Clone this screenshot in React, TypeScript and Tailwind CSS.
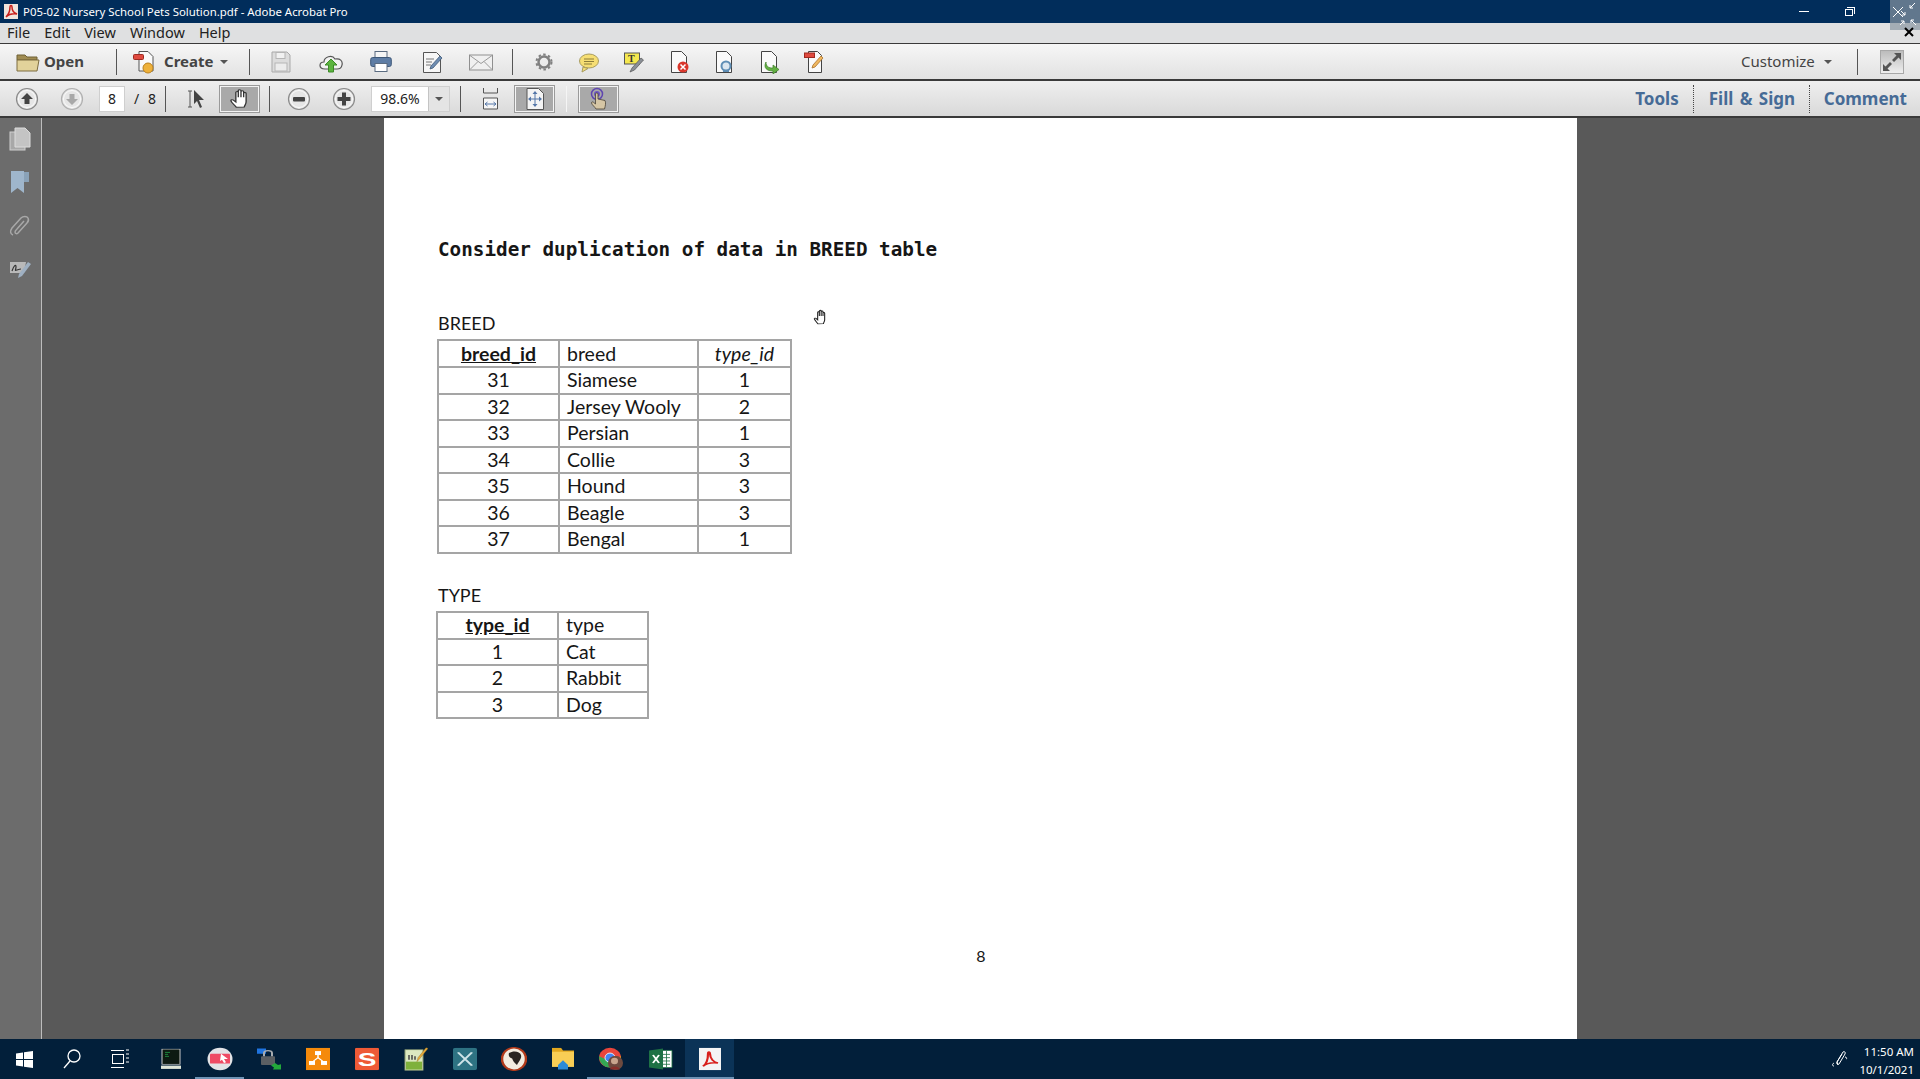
import { ReactNode } from "react";

const breeds = [
  ["31", "Siamese", "1"],
  ["32", "Jersey Wooly", "2"],
  ["33", "Persian", "1"],
  ["34", "Collie", "3"],
  ["35", "Hound", "3"],
  ["36", "Beagle", "3"],
  ["37", "Bengal", "1"],
];

const types = [
  ["1", "Cat"],
  ["2", "Rabbit"],
  ["3", "Dog"],
];

const cell = "border-2 border-[#a5a5a5] pl-[7px] pr-[5px] py-0 font-normal leading-[20px]";
const centerCell = "border-2 border-[#a5a5a5] px-[6px] py-0 font-normal leading-[20px] text-center";

const Sep = ({ className }: { className: string }) => (
  <div className={`h-[26px] w-px shrink-0 bg-[#555] ${className}`} />
);

const Caret = ({ className, color = "#555" }: { className: string; color?: string }) => (
  <svg width="8" height="4" viewBox="0 0 8 4" className={`shrink-0 ${className}`}>
    <path d="M0 0h8L4 4z" fill={color} />
  </svg>
);

const Icon = ({ w, h = 24, className, children }: { w: number; h?: number; className: string; children: ReactNode }) => (
  <svg width={w} height={h} viewBox={`0 0 ${w} ${h}`} className={`shrink-0 ${className}`}>
    {children}
  </svg>
);

const DocShape = () => (
  <path d="M1.500 1.500h10l5 5v16h-15z" fill="#fafafa" stroke="#444" strokeWidth="1" />
);

const RoundBtn = ({ className, active, children }: { className: string; active?: boolean; children: ReactNode }) => (
  <svg width="24" height="24" viewBox="0 0 24 24" className={`shrink-0 ${className}`}>
    <circle cx="12" cy="12" r="10.500" fill="#e6e6e6" stroke={active ? "#8a8a8a" : "#b0b0b0"} strokeWidth="1.200" />
    <circle cx="12" cy="12" r="8.500" fill="none" stroke="#fafafa" />
    <g fill={active ? "#444" : "#a8a8a8"}>{children}</g>
  </svg>
);

const PressedBtn = ({ className, children }: { className: string; children: ReactNode }) => (
  <div className={`flex h-[26px] w-[39px] shrink-0 items-center justify-center border border-[#f4f4f4] bg-[#a9a9a9] outline outline-1 outline-[#9a9a9a] ${className}`}>
    {children}
  </div>
);

// open hand with four fingers, same shape for the tool button and the page cursor
const HandPath = "M6 21c-1-2-4-5-4.400-7-.2-1.200 1.200-1.500 2-.7l2 2V5c0-1.500 2-1.500 2 0v5-7c0-1.500 2.200-1.500 2.200 0v7-6c0-1.500 2.200-1.500 2.200 0v6-4c0-1.400 2-1.400 2 0v9c0 2.500-1 3.500-1.500 5.700z";

const Toolbar1 = () => (
  <div className="flex h-[37px] items-center border-b-2 border-[#3a3a3a] bg-gradient-to-b from-[#f6f6f6] to-[#e2e2e2]">
    <Icon w={24} className="ml-[16px]">
      <path d="M1 5h8l2 2h10v3H1z" fill="#a08c52" stroke="#6f6035" />
      <path d="M1 21V10h22l-2 11z" fill="#e2d29a" stroke="#7c6c40" />
    </Icon>
    <span className="ml-[4px] w-[41px] whitespace-nowrap text-[15px] font-bold text-[#444]">Open</span>
    <Sep className="ml-[31px]" />
    <Icon w={22} className="ml-[16px]">
      <path d="M6 1.500h9l5 5V21H6z" fill="#fafafa" stroke="#555" />
      <rect x="0.500" y="4.500" width="10" height="5" rx="1" fill="#e04a3f" stroke="#9c2a22" />
      <circle cx="15" cy="18" r="5" fill="#eeb13a" stroke="#b9801e" />
    </Icon>
    <span className="ml-[9px] w-[49px] whitespace-nowrap text-[15px] font-bold text-[#444]">Create</span>
    <Caret className="ml-[7px]" />
    <Sep className="ml-[21px]" />
    <Icon w={20} className="ml-[21px]">
      <path d="M1 2h15l3 3v17H1z" fill="#dcdcdc" stroke="#a9a9a9" />
      <rect x="5" y="2.500" width="9" height="6" fill="#f1f1f1" stroke="#b5b5b5" />
      <rect x="4" y="13" width="12" height="8" fill="#ececec" stroke="#b5b5b5" />
    </Icon>
    <Icon w={24} className="ml-[28px]">
      <path d="M6 19c-7 0-6-7-1-7 0-5 8-8 11-3 5-1 8 2 7 6-.5 3-3 4-5 4z" fill="#f2f2f2" stroke="#555" strokeWidth="1.200" />
      <path d="M12 9l-6 6h3.500v7h5v-7H18z" fill="#5cb43f" stroke="#3d8a28" />
    </Icon>
    <Icon w={22} className="ml-[27px]">
      <rect x="5" y="1.500" width="12" height="7" fill="#f5f5f5" stroke="#5a6b80" />
      <rect x="0.700" y="7.500" width="20.600" height="9" rx="2" fill="#5e7da5" stroke="#3e5878" />
      <rect x="5" y="13.500" width="12" height="8" fill="#fff" stroke="#5a6b80" />
    </Icon>
    <Icon w={21} className="ml-[30px]">
      <path d="M1.500 2.500h13l4 4v16h-17z" fill="#f6f6f6" stroke="#555" />
      <path d="M4 9h8M4 12h6M4 15h5" stroke="#777" />
      <path d="M8 19l1-3 9-10 2 2-9 10z" fill="#6e8db2" stroke="#3e5878" strokeWidth="0.800" />
    </Icon>
    <Icon w={24} className="ml-[26px]">
      <rect x="0.500" y="5" width="23" height="15" fill="#f0f0f0" stroke="#8f8f8f" />
      <path d="M1 5.500l11 8 11-8M1 19.500l8-8M23 19.500l-8-8" fill="none" stroke="#9a9a9a" />
    </Icon>
    <Sep className="ml-[19px]" />
    <Icon w={18} className="ml-[22px]">
      <circle cx="9" cy="12" r="5.500" fill="none" stroke="#808080" strokeWidth="2.500" />
      <circle cx="9" cy="12" r="7.500" fill="none" stroke="#808080" strokeWidth="2" strokeDasharray="2.500 2.400" />
    </Icon>
    <Icon w={20} className="ml-[26px]">
      <ellipse cx="10" cy="11" rx="9.500" ry="7" fill="#f6de73" stroke="#a89c5f" />
      <path d="M4 17l-1 5 6-3.500z" fill="#f6de73" stroke="#a89c5f" />
      <path d="M5 9h10M5 11.500h10M5 14h8" stroke="#8c7d3a" />
    </Icon>
    <Icon w={20} className="ml-[25px]">
      <rect x="0.500" y="3" width="15" height="11" fill="#f5e84f" stroke="#555" />
      <text x="4" y="12" fontSize="10" fontWeight="700" fontFamily="Liberation Serif, serif" fill="#333">T</text>
      <path d="M6 22l2-4 9-10 2.500 2-9 10z" fill="#8a8f96" stroke="#555" strokeWidth="0.700" />
    </Icon>
    <Icon w={19} className="ml-[26px]">
      <DocShape />
      <circle cx="13" cy="17" r="5.500" fill="#d9362b" />
      <path d="M10.500 14.500l5 5m0-5l-5 5" stroke="#fff" strokeWidth="1.500" />
    </Icon>
    <Icon w={18} className="ml-[26px]">
      <DocShape />
      <circle cx="11" cy="16" r="4.500" fill="#dbe6ef" stroke="#5f8eb5" strokeWidth="2" />
      <path d="M8 21h6" stroke="#5f8eb5" strokeWidth="2" />
    </Icon>
    <Icon w={19} className="ml-[27px]">
      <DocShape />
      <path d="M6 12c0 5 3 6 7 6v-3l6 4.500-6 4.500v-3c-6 0-10-3-7-9z" fill="#63b043" stroke="#3d7f26" strokeWidth="0.700" />
    </Icon>
    <Icon w={21} className="ml-[25px]">
      <path d="M4.500 1.500h9l4 4v17h-13z" fill="#fafafa" stroke="#444" />
      <rect x="0.500" y="3" width="10" height="4.500" fill="#e04a3f" stroke="#a0291f" />
      <path d="M8 18l1-3 8-9 2 2-8 9z" fill="#f0b860" stroke="#a9702a" strokeWidth="0.800" />
    </Icon>
    <div className="ml-auto flex items-center pr-[16px]">
      <span className="w-[72px] whitespace-nowrap text-[15px] text-[#444]">Customize</span>
      <Caret className="ml-[11px]" />
      <Sep className="ml-[25px]" />
      <div className="ml-[22px] flex h-[24px] w-[24px] items-center justify-center border border-[#a8a8a8] bg-gradient-to-b from-[#bcbcbc] to-[#efefef]">
        <svg width="20" height="20" viewBox="0 0 20 20">
          <path d="M12 1h7v7l-2.500-2.500L12 10 10 8l4.500-4.500z" fill="#555" />
          <path d="M8 19H1v-7l2.500 2.500L8 10l2 2-4.500 4.500z" fill="#555" />
        </svg>
      </div>
    </div>
  </div>
);

const Toolbar2 = () => (
  <div className="flex h-[37px] items-center border-b-2 border-[#3a3a3a] bg-gradient-to-b from-[#efefef] to-[#d9d9d9]">
    <RoundBtn className="ml-[15px]" active>
      <path d="M12 6l6 6h-3.500v5h-5v-5H6z" />
    </RoundBtn>
    <RoundBtn className="ml-[21px]">
      <path d="M12 18l6-6h-3.500V7h-5v5H6z" />
    </RoundBtn>
    <div className="ml-[15px] flex h-[26px] w-[26px] items-center justify-center border border-[#cfcfcf] bg-white text-[14px] text-[#222]">8</div>
    <span className="ml-[9px] flex w-[22px] justify-between text-[14px] text-[#222]">
      <span>/</span>
      <span>8</span>
    </span>
    <Sep className="ml-[9px]" />
    <Icon w={18} className="ml-[21px]">
      <path d="M1 4h4M1 20h4M3 4v16" stroke="#555" fill="none" />
      <path d="M7 3l10 10h-5l3 7-2 1-3-7-3 3z" fill="#444" />
    </Icon>
    <PressedBtn className="ml-[15px]">
      <svg width="22" height="22" viewBox="0 0 18 24" preserveAspectRatio="none">
        <path d={HandPath} fill="#fff" stroke="#333" strokeWidth="1.100" />
      </svg>
    </PressedBtn>
    <Sep className="ml-[10px]" />
    <RoundBtn className="ml-[17px]" active>
      <rect x="6" y="10" width="12" height="4.500" rx="1" />
    </RoundBtn>
    <RoundBtn className="ml-[21px]" active>
      <path d="M10 5.500h4V10h4.500v4H14v4.500h-4V14H5.500v-4H10z" />
    </RoundBtn>
    <div className="ml-[15px] flex h-[26px] w-[79px] items-stretch border border-[#cfcfcf] bg-white">
      <span className="flex w-[56px] items-center justify-center text-[14px] text-[#222]">98.6%</span>
      <span className="flex flex-1 items-center justify-center border-l border-[#c4c4c4] bg-[#e4e4e4]">
        <Caret className="" />
      </span>
    </div>
    <Sep className="ml-[10px]" />
    <Icon w={17} className="ml-[21px]">
      <path d="M1.500 1v5h14V1" fill="none" stroke="#555" />
      <path d="M1.500 22v-11h14v11z" fill="#f6f6f6" stroke="#555" />
      <path d="M3 17h11M3 17l2.500-2M3 17l2.500 2M14 17l-2.500-2M14 17l-2.500 2" stroke="#5577a8" fill="none" />
    </Icon>
    <PressedBtn className="ml-[16px]">
      <svg width="18" height="22" viewBox="0 0 18 22">
        <path d="M1 .5h11.500l5 5V21.500H1z" fill="#f4f4f4" stroke="#555" />
        <path d="M9 4v14M3 11h12" stroke="#5577a8" />
        <path d="M9 3l2.500 3h-5zM9 19l2.500-3h-5zM2 11l3-2.500v5zM16 11l-3-2.500v5z" fill="#5577a8" />
      </svg>
    </PressedBtn>
    <Sep className="ml-[12px] !bg-[#f5f5f5]" />
    <PressedBtn className="ml-[12px]">
      <svg width="20" height="24" viewBox="0 0 20 24">
        <circle cx="8" cy="7" r="5.500" fill="none" stroke="#5f46b0" strokeWidth="1.500" />
        <circle cx="8" cy="7" r="3" fill="#6d55c2" />
        <path d="M6.500 7c0-1.500 2.500-1.500 2.500 0v5l7 1.500c1 2 .5 5-.5 8.500H7c-1-2-4-4-4.500-6-.2-1 1-1.500 2-.7l2 1.700z" fill="#d6c6a5" stroke="#4a4236" strokeWidth="0.800" />
      </svg>
    </PressedBtn>
    <div className="ml-auto flex items-center text-[17px] font-bold text-[#466b96]">
      <span className="whitespace-nowrap">Tools</span>
      <div className="ml-[14px] h-[28px] border-l border-dotted border-[#444]" />
      <span className="ml-[15px] w-[85px] whitespace-nowrap [word-spacing:2px]">Fill &amp; Sign</span>
      <div className="ml-[15px] h-[28px] border-l border-dotted border-[#444]" />
      <span className="ml-[14px] mr-[13px] whitespace-nowrap">Comment</span>
    </div>
  </div>
);

const SideRail = () => (
  <div className="flex w-[42px] shrink-0 flex-col items-center border-r border-[#bdbdbd] bg-[#6c6c6c] pr-[2px] pt-[9px]">
    <svg width="22" height="24" viewBox="0 0 22 24">
      <rect x="1" y="5" width="15" height="18" fill="#a8a8a8" stroke="#cfcfcf" />
      <path d="M6 1h10l5 5v14H6z" fill="#c4c4c4" stroke="#dcdcdc" />
    </svg>
    <svg width="20" height="24" viewBox="0 0 20 24" className="mt-[19px]">
      <path d="M1 1h13v22l-6.500-5L1 23z" fill="#9fb6cc" />
      <path d="M14 2h5v10h-5z" fill="#8aa2b8" />
    </svg>
    <svg width="22" height="24" viewBox="0 0 22 24" className="mt-[20px]">
      <path d="M4 21c-3-1-3-4-1-7l9-10c2-2 6-2 7 0s0 4-1 5l-9 10c-1 1-3 1-3-1 0-1 1-2 2-3l7-8" fill="none" stroke="#a8a8a8" strokeWidth="1.500" />
    </svg>
    <svg width="22" height="20" viewBox="0 0 22 20" className="mt-[21px]">
      <path d="M1 3h16l-2 11H1z" fill="#b9b9b9" />
      <path d="M3 12c2-6 4-7 4-4s-2 4 1 3 3-1 4-1" fill="none" stroke="#333" strokeWidth="1.200" />
      <path d="M9 19l1-4 9-12 3 2-9 12z" fill="#9fb0c2" />
    </svg>
  </div>
);

const Page = () => (
  <div className="relative h-full w-[1193px] bg-white pl-[53px] pt-[120px] text-[19.500px] leading-[26px] text-[#161616] [font-family:Lato,sans-serif]">
    <h1 className="ml-[1px] whitespace-nowrap text-[19.300px] font-bold leading-[24px] [font-family:'DejaVu_Sans_Mono',monospace]">
      Consider duplication of data in BREED table
    </h1>
    <p className="ml-[1px] mt-[48px] h-[26px] text-[18px]">BREED</p>
    <table className="mt-[3px] table-fixed border-collapse">
      <thead>
        <tr className="h-[27px]">
          <th className={`${centerCell} w-[121px] !font-bold underline`}>breed_id</th>
          <th className={`${cell} w-[139px] text-left`}>breed</th>
          <th className={`${centerCell} w-[93px] italic`}>type_id</th>
        </tr>
      </thead>
      <tbody>
        {breeds.map(([id, name, typeId]) => (
          <tr key={id} className="h-[26.500px]">
            <td className={centerCell}>{id}</td>
            <td className={cell}>{name}</td>
            <td className={centerCell}>{typeId}</td>
          </tr>
        ))}
      </tbody>
    </table>
    <p className="ml-[1px] mt-[28px] h-[26px] text-[18px]">TYPE</p>
    <table className="mt-[3px] -ml-[1px] table-fixed border-collapse">
      <thead>
        <tr className="h-[27px]">
          <th className={`${centerCell} w-[121px] !font-bold underline`}>type_id</th>
          <th className={`${cell} w-[90px] text-left`}>type</th>
        </tr>
      </thead>
      <tbody>
        {types.map(([id, name]) => (
          <tr key={id} className="h-[26.500px]">
            <td className={centerCell}>{id}</td>
            <td className={cell}>{name}</td>
          </tr>
        ))}
      </tbody>
    </table>
    <p className="mt-[224px] -ml-[53px] text-center text-[16px] [text-indent:1px]">8</p>
    <svg width="15" height="17" viewBox="0 0 18 24" preserveAspectRatio="none" className="absolute left-[429px] top-[191px]">
      <path d={HandPath} fill="#fff" stroke="#222" strokeWidth="1.300" />
    </svg>
  </div>
);

const WinLogo = () => (
  <svg width="17" height="17" viewBox="0 0 17 17">
    <path d="M0 2.500l7-1v6.500H0zM8 1.300L17 0v8H8zM0 9h7v6.500l-7-1zM8 9h9v8l-9-1.300z" fill="#fff" />
  </svg>
);

const taskApps: { key: string; bar?: boolean; active?: boolean; icon: ReactNode }[] = [
  {
    key: "terminal",
    icon: (
      <svg width="20" height="32" viewBox="0 0 20 32">
        <rect x="1" y="1" width="18" height="23" fill="#0d1a12" stroke="#c9c9c9" />
        <path d="M4 6h5M4 9h3M4 12h4" stroke="#1f9a45" />
        <rect x="0" y="26" width="20" height="5" fill="#dfe6d8" />
      </svg>
    ),
  },
  {
    key: "recorder",
    bar: true,
    icon: (
      <svg width="26" height="36" viewBox="0 0 26 36">
        <ellipse cx="13" cy="18" rx="12.500" ry="17" fill="#e2e2e6" />
        <rect x="3" y="10" width="20" height="15" rx="1" fill="#ef4a64" />
        <path d="M14 10l7 8h-4l2 5-2 1-2-5-2 2z" fill="#fff" />
      </svg>
    ),
  },
  {
    key: "lock",
    icon: (
      <svg width="26" height="34" viewBox="0 0 26 34">
        <path d="M1 1h9v8H1z" fill="#1f74e0" />
        <rect x="5" y="13" width="14" height="13" rx="1" fill="#5b5f63" />
        <path d="M8 13V8c0-5 8-5 8 0v5" fill="none" stroke="#a8acb0" strokeWidth="2" />
        <path d="M15 27l4-4 3 3 3-1v8h-8l1-3z" fill="#22a83a" />
      </svg>
    ),
  },
  {
    key: "orange",
    icon: (
      <svg width="24" height="34" viewBox="0 0 24 34">
        <rect width="24" height="34" fill="#f58a0b" />
        <path d="M12 7v8M12 15l-6 7M12 15l6 7" stroke="#fff" strokeWidth="1.500" />
        <rect x="9" y="5" width="6" height="6" fill="#fff" />
        <rect x="3" y="20" width="6" height="6" fill="#fff" />
        <rect x="15" y="20" width="6" height="6" fill="#fff" />
      </svg>
    ),
  },
  {
    key: "snagit",
    icon: (
      <svg width="24" height="34" viewBox="0 0 24 34">
        <rect width="24" height="34" rx="2" fill="#ee5a36" />
        <text x="12" y="27" textAnchor="middle" fontSize="28" fontWeight="700" fontFamily="Liberation Sans, sans-serif" fill="#fff">S</text>
      </svg>
    ),
  },
  {
    key: "notes",
    icon: (
      <svg width="24" height="36" viewBox="0 0 24 36">
        <rect x="1" y="4" width="18" height="31" fill="#dce8c0" stroke="#8a9a70" />
        <rect x="2" y="22" width="16" height="12" fill="#7fb13c" />
        <path d="M5 12v7M8 12v7M11 14v5" stroke="#444" strokeWidth="1.500" />
        <path d="M13 22l1-6 8-15 2 1-8 15z" fill="#e8a93a" stroke="#8a6a20" strokeWidth="0.500" />
      </svg>
    ),
  },
  {
    key: "tools",
    icon: (
      <svg width="24" height="34" viewBox="0 0 24 34">
        <rect width="24" height="34" rx="3" fill="#2e7283" />
        <path d="M5 7l14 20M19 7L5 27" stroke="#cfe3e8" strokeWidth="2.500" />
      </svg>
    ),
  },
  {
    key: "dog",
    icon: (
      <svg width="26" height="36" viewBox="0 0 26 36">
        <ellipse cx="13" cy="18" rx="12" ry="17" fill="#f3ece0" stroke="#b23a1a" strokeWidth="2.500" />
        <path d="M8 9c4-4 11-3 12 3 1 5-2 9-4 15-3-3-4-6-5-10-2 0-4-4-3-8z" fill="#2a2420" />
      </svg>
    ),
  },
  {
    key: "folder",
    icon: (
      <svg width="22" height="34" viewBox="0 0 22 34">
        <path d="M0 0h9l2 4h11v6H0z" fill="#e3a81f" />
        <rect y="6" width="22" height="23" fill="#f9ce55" />
        <path d="M6 26l5-7 5 7v7H6z" fill="#2e8bd8" />
      </svg>
    ),
  },
  {
    key: "chrome",
    bar: true,
    icon: (
      <div className="relative h-[36px] w-[26px]">
        <svg width="24" height="34" viewBox="0 0 24 34">
          <ellipse cx="11" cy="16" rx="11" ry="15" fill="#e8453c" />
          <path d="M0 14C0 24 5 31 11 31l5-12H8z" fill="#34a853" />
          <path d="M22 14c0 10-5 17-11 17l5-12z" fill="#fbbc05" />
          <ellipse cx="11" cy="16" rx="5" ry="7" fill="#4285f4" stroke="#fff" />
        </svg>
        <svg width="15" height="22" viewBox="0 0 15 22" className="absolute left-[9px] top-[13px]">
          <ellipse cx="7.500" cy="11" rx="7.500" ry="11" fill="#6d4a3f" />
          <ellipse cx="6.500" cy="8" rx="3.500" ry="5" fill="#c9a68e" />
          <path d="M2 21c0-6 9-6 10 0z" fill="#8a2f2a" />
        </svg>
      </div>
    ),
  },
  {
    key: "excel",
    bar: true,
    icon: (
      <svg width="24" height="34" viewBox="0 0 24 34">
        <path d="M11 4h12v26H11z" fill="#fff" stroke="#1e7145" />
        <path d="M14 10h7M14 15h7M14 20h7M14 25h7M17.500 5v24" stroke="#1e7145" />
        <path d="M0 4l14-3v32L0 30z" fill="#1e7145" />
        <path d="M4 11l6 12m0-12L4 23" stroke="#fff" strokeWidth="2" />
      </svg>
    ),
  },
  {
    key: "acrobat",
    bar: true,
    active: true,
    icon: (
      <svg width="22" height="34" viewBox="0 0 22 34">
        <path d="M0 0h22v34H0z" fill="#f4f4f4" />
        <path d="M4 28c3-3 5-11 5-19 0-4 2-3 2 0 0 8 4 13 8 14-5-1-11 0-15 5z" fill="none" stroke="#d8201c" strokeWidth="2.200" />
      </svg>
    ),
  },
];

const Taskbar = () => (
  <div className="flex h-[40px] shrink-0 items-center bg-[#021f3a] text-white">
    <div className="flex h-full w-[48px] items-center justify-center"><WinLogo /></div>
    <div className="flex h-full w-[48px] items-center justify-center">
      <svg width="18" height="20" viewBox="0 0 18 20">
        <circle cx="11" cy="7" r="6" fill="none" stroke="#fff" strokeWidth="1.300" />
        <path d="M7 12L1 19" stroke="#fff" strokeWidth="1.300" />
      </svg>
    </div>
    <div className="flex h-full w-[48px] items-center justify-center">
      <svg width="18" height="20" viewBox="0 0 18 20" fill="none" stroke="#fff">
        <rect x="1.500" y="5.500" width="11" height="9" />
        <path d="M0 1.500h13M0 18.500h13M15 1h3M15 5h3M15 9h3M15 13h3" />
      </svg>
    </div>
    <div className="ml-[2px] flex h-full">
      {taskApps.map((app) => (
        <div
          key={app.key}
          className={`flex h-full w-[49px] items-center justify-center border-b-2 pt-[2px] ${app.bar ? "border-[#6f93b5]" : "border-transparent"} ${app.active ? "bg-[#0b3357]" : ""}`}
        >
          <div className="scale-y-[0.66]">{app.icon}</div>
        </div>
      ))}
    </div>
    <div className="ml-auto flex items-center pr-[6px]">
      <svg width="18" height="18" viewBox="0 0 18 18" className="mr-[13px]" fill="none" stroke="#fff">
        <path d="M7 15l-1-3 6-10c1-1 3 0 2 2l-6 10c-1 1-3 0-2-2l5-8M3 13c-2 1-2 3 0 3M14 7c2 0 2 2 1 2" />
      </svg>
      <div className="flex w-[52px] flex-col items-end pt-[3px] text-[11.500px] leading-[18px] [font-family:'Noto_Sans',sans-serif]">
        <span>11:50 AM</span>
        <span>10/1/2021</span>
      </div>
    </div>
  </div>
);

export default function App() {
  return (
    <div className="relative flex h-[1079px] w-[1920px] flex-col overflow-hidden bg-[#595959] [font-family:'Noto_Sans',sans-serif]">
      <div className="flex h-[23px] shrink-0 items-center bg-[#012d5b] pl-[4px] text-[11.400px] text-white">
        <svg width="14" height="15" viewBox="0 0 14 15" className="mr-[5px]">
          <path d="M0 0h14v15H0z" fill="#f1e4dc" />
          <path d="M2 13c2-2 4-6 4-10 0-2 2-2 2 0 0 4 2 6 5 7-4-.5-8 0-11 3z" fill="none" stroke="#c9201c" strokeWidth="1.500" />
        </svg>
        <span>P05-02 Nursery School Pets Solution.pdf - Adobe Acrobat Pro</span>
        <div className="ml-auto flex items-center pr-[65px]">
          <div className="h-px w-[10px] bg-white" />
          <div className="relative ml-[36px] h-[9px] w-[10px]">
            <div className="absolute bottom-0 left-0 h-[7px] w-[8px] border border-white" />
            <div className="absolute right-0 top-0 h-[7px] w-[8px] border-r border-t border-white" />
          </div>
        </div>
      </div>
      <div className="flex h-[20px] shrink-0 items-center gap-[14px] bg-[#dfe0e1] pl-[7px] text-[14.500px] text-[#222]">
        <span>File</span>
        <span>Edit</span>
        <span>View</span>
        <span>Window</span>
        <span>Help</span>
      </div>
      <div className="shrink-0 border-t border-[#3a3a3a]">
        <Toolbar1 />
        <Toolbar2 />
      </div>
      <div className="flex min-h-0 flex-1">
        <SideRail />
        <div className="flex flex-1 justify-start bg-[#595959] pl-[342px]">
          <Page />
        </div>
      </div>
      <Taskbar />
      <div className="absolute right-0 top-0 flex h-[30px] w-[30px] items-center justify-center bg-[#8a97a3]/70">
        <svg width="28" height="28" viewBox="0 0 28 28" fill="none" stroke="#fff">
          <path d="M2 6l10 10M12 6L2 16" />
          <path d="M10 10l4 4m0-3v3h-3M24 2l-5 5m0-3v3h3M9 24l4-4m-3 0h3v3M25 24l-5-5m3 0h-3v3" />
        </svg>
      </div>
      <svg width="10" height="10" viewBox="0 0 10 10" className="absolute left-[1904px] top-[27px]">
        <path d="M1 1l8 8M9 1l-8 8" stroke="#000" strokeWidth="2" />
      </svg>
    </div>
  );
}
